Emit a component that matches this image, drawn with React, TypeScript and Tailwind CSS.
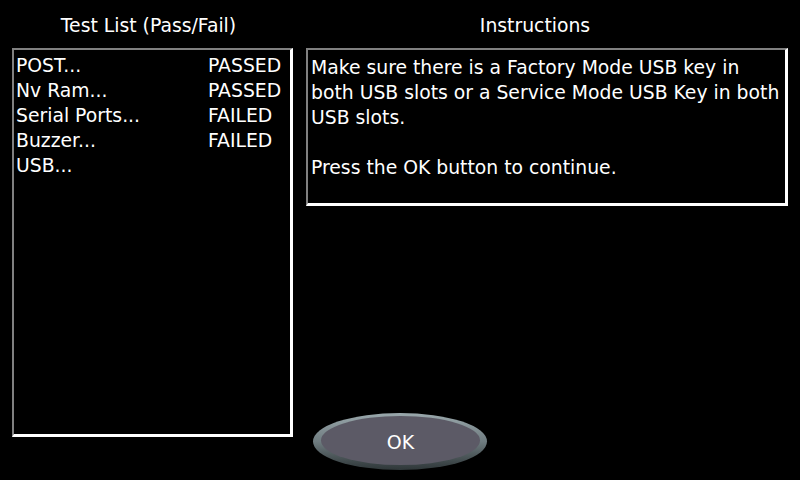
import React from "react";

const rows: [string, string][] = [
  ["POST...", "PASSED"],
  ["Nv Ram...", "PASSED"],
  ["Serial Ports...", "FAILED"],
  ["Buzzer...", "FAILED"],
  ["USB...", ""],
];

export default function App() {
  return (
    <div
      className="w-[800px] h-[480px] bg-black text-white flex overflow-hidden"
      style={{ fontFamily: '"DejaVu Sans", "Noto Sans", sans-serif' }}
    >
      <div className="ml-[12px] w-[281px] flex flex-col">
        <div className="h-[48px] flex items-center justify-center text-[18.8px] pt-[5px] pr-[8px]">
          Test List (Pass/Fail)
        </div>
        <div className="h-[389px] border-t-2 border-l-2 border-r-[3px] border-b-[3px] border-t-[#808080] border-l-[#808080] border-r-white border-b-white pt-[4px] pl-[2px]">
          {rows.map(([name, status]) => (
            <div key={name} className="h-[25px] flex items-center text-[18.8px] leading-none">
              <span className="w-[192px]">{name}</span>
              <span>{status}</span>
            </div>
          ))}
        </div>
      </div>
      <div className="ml-[13px] w-[482px] flex flex-col">
        <div className="h-[48px] flex items-center justify-center text-[18.8px] pt-[5px] pr-[24px]">
          Instructions
        </div>
        <div className="h-[158px] border-t-2 border-l-2 border-r-[3px] border-b-[3px] border-t-[#808080] border-l-[#808080] border-r-white border-b-white pt-[5px] pl-[3px] text-[18.8px] leading-[25px]">
          <div>Make sure there is a Factory Mode USB key in</div>
          <div>both USB slots or a Service Mode USB Key in both</div>
          <div>USB slots.</div>
          <div>&nbsp;</div>
          <div>Press the OK button to continue.</div>
        </div>
        <div className="mt-auto mb-[10px] ml-[7px] w-[174px] h-[57px] rounded-[50%] bg-gradient-to-b from-[#9aa8ac] via-[#6f7c80] to-[#2e3638] pl-[8px] pr-[7px] pt-[3px] pb-[5px]">
          <div className="w-full h-full rounded-[50%] bg-[#5c5a66] flex items-center justify-center text-[19px] pt-[3px]">
            OK
          </div>
        </div>
      </div>
    </div>
  );
}
